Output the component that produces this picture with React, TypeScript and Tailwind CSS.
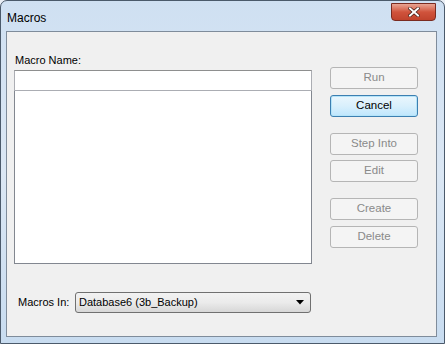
import React from "react";

const font = { fontFamily: '"Liberation Sans", Arial, sans-serif' };

function Btn({ label, def = false }: { label: string; def?: boolean }) {
  if (def) {
    return (
      <div className="h-[22px] w-[88px] rounded-[3px] border border-[#3c7fb1] bg-gradient-to-b from-[#eaf6fd] via-[#d9f0fc] to-[#bee6fd] shadow-[inset_0_0_0_1px_#b4e4f9] flex items-center justify-center text-[11.5px] text-black">
        {label}
      </div>
    );
  }
  return (
    <div className="h-[22px] w-[88px] rounded-[3px] border border-[#b5b5b5] bg-[#f4f4f4] flex items-center justify-center text-[11.5px] text-[#8a8a8a]">
      {label}
    </div>
  );
}

export default function App() {
  return (
    <div style={font} className="w-[445px] h-[344px] overflow-hidden bg-[#e9eef5]">
      <div className="w-[445px] h-[344px] rounded-t-[7px] border border-[#4b5a6b] bg-gradient-to-b from-[#cfe0f2] via-[#dbe7f4] to-[#c8dcf0] flex flex-col">
        {/* title bar */}
        <div className="h-[30px] flex items-start justify-between pl-[6px] pr-[8px]">
          <div className="pt-[8px] text-[12px] text-black">Macros</div>
          <div className="mt-[2px] w-[45px] h-[18px] rounded-b-[4px] border border-[#7a2b20] bg-gradient-to-b from-[#e8a493] via-[#d0533c] to-[#c0432d] flex items-center justify-center">
            <svg width="12" height="10" viewBox="0 0 12 10">
              <path d="M2 1.5 L10 8.5 M10 1.5 L2 8.5" stroke="#3d1a14" strokeWidth="3.4" strokeLinecap="square" />
              <path d="M2 1.5 L10 8.5 M10 1.5 L2 8.5" stroke="#ffffff" strokeWidth="2" strokeLinecap="square" />
            </svg>
          </div>
        </div>
        {/* client area */}
        <div className="ml-[5px] mr-[7px] mb-[6px] flex-1 border border-[#7f8c9b] bg-[#f0f0f0] flex flex-col">
          <div className="flex pl-[7px] pt-[21px]">
            <div className="w-[298px] flex flex-col">
              <div className="pl-[1px] h-[17px] text-[11px] text-black leading-[14px]">Macro Name:</div>
              <div className="h-[21px] border border-[#abadb3] border-t-[#8e8f8f] bg-white" />
              <div className="h-[173px] border border-[#828790] border-t-0 bg-white" />
            </div>
            <div className="ml-[18px] flex flex-col mt-[14px]">
              <Btn label="Run" />
              <div className="h-[6px]" />
              <Btn label="Cancel" def />
              <div className="h-[16px]" />
              <Btn label="Step Into" />
              <div className="h-[5px]" />
              <Btn label="Edit" />
              <div className="h-[16px]" />
              <Btn label="Create" />
              <div className="h-[6px]" />
              <Btn label="Delete" />
            </div>
          </div>
          <div className="flex items-center pl-[11px] mt-[28px]">
            <div className="text-[11px] text-black w-[57px]">Macros In:</div>
            <div className="w-[236px] h-[21px] rounded-[3px] border border-[#707070] bg-gradient-to-b from-[#f2f2f2] via-[#ebebeb] to-[#d7d7d7] flex items-center justify-between pl-[3px] pr-[6px]">
              <span className="text-[11px] text-black">Database6 (3b_Backup)</span>
              <svg width="8" height="5" viewBox="0 0 8 5">
                <path d="M0 0 H8 L4 4.5 Z" fill="#000" />
              </svg>
            </div>
          </div>
        </div>
      </div>
    </div>
  );
}
